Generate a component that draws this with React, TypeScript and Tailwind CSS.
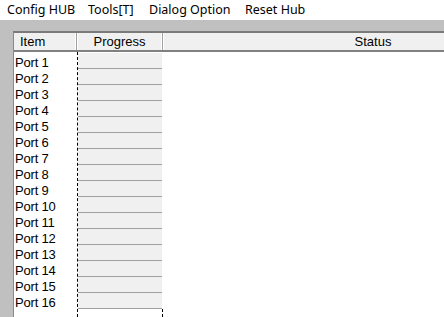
const menus = [
  { label: 'Config HUB', w: 'w-[81px]' },
  { label: 'Tools[T]', w: 'w-[61px]' },
  { label: 'Dialog Option', w: 'w-[96px]' },
  { label: 'Reset Hub', w: 'w-[80px]' },
];
const ports = Array.from({ length: 16 }, (_, i) => `Port ${i + 1}`);

const App = () => {
  return (
    <div className="w-[444px] h-[317px] overflow-hidden bg-white flex flex-col">
      {/* menu bar */}
      <div className="h-[20px] flex items-center pl-[7px] text-[12.5px] text-black font-['Noto_Sans','Open_Sans',sans-serif] shrink-0">
        {menus.map((m) => (
          <span key={m.label} className={`${m.w} shrink-0 leading-[20px] whitespace-nowrap`}>
            {m.label}
          </span>
        ))}
      </div>

      {/* gray client area */}
      <div className="flex-1 bg-[#c0c0c0] pt-[11px] pl-[13px] flex flex-col min-h-0">
        <div className="flex-1 bg-white border-t-2 border-l border-t-[#7a7a7a] border-l-[#8a8a8a] overflow-hidden flex flex-col font-['Liberation_Sans',Arial,sans-serif] text-black">
          {/* header */}
          <div className="h-[19px] shrink-0 flex bg-[#f0f0f0] border-b-2 border-b-[#808080] text-[13px]">
            <div className="w-[63px] shrink-0 pl-[6px] leading-[17px] border-r border-r-[#a0a0a0] shadow-[inset_-1px_0_0_#ffffff]">
              Item
            </div>
            <div className="w-[86px] shrink-0 text-center leading-[17px] border-r border-r-[#a0a0a0] shadow-[inset_-1px_0_0_#ffffff,inset_1px_0_0_#ffffff]">
              Progress
            </div>
            <div className="w-[420px] shrink-0 text-center leading-[17px] shadow-[inset_1px_0_0_#ffffff]">
              Status
            </div>
          </div>

          {/* rows */}
          <div className="flex flex-1 min-h-0">
            <div className="w-[63px] shrink-0 flex flex-col pt-[3px]">
              {ports.map((p) => (
                <div key={p} className="h-[16px] leading-[16px] pl-[1px] text-[13px] tracking-[-0.2px] whitespace-nowrap">
                  {p}
                </div>
              ))}
            </div>
            <div className="w-[86px] shrink-0 flex flex-col border-l border-dashed border-l-black pt-[1px]">
              {ports.map((p) => (
                <div key={p} className="h-[16px] bg-[#f0f0f0] border-b border-b-[#a0a0a0] mr-[1px]" />
              ))}
              <div className="flex-1 border-r border-dashed border-r-black" />
            </div>
            <div className="flex-1" />
          </div>
        </div>
      </div>
    </div>
  );
};

export default App;
